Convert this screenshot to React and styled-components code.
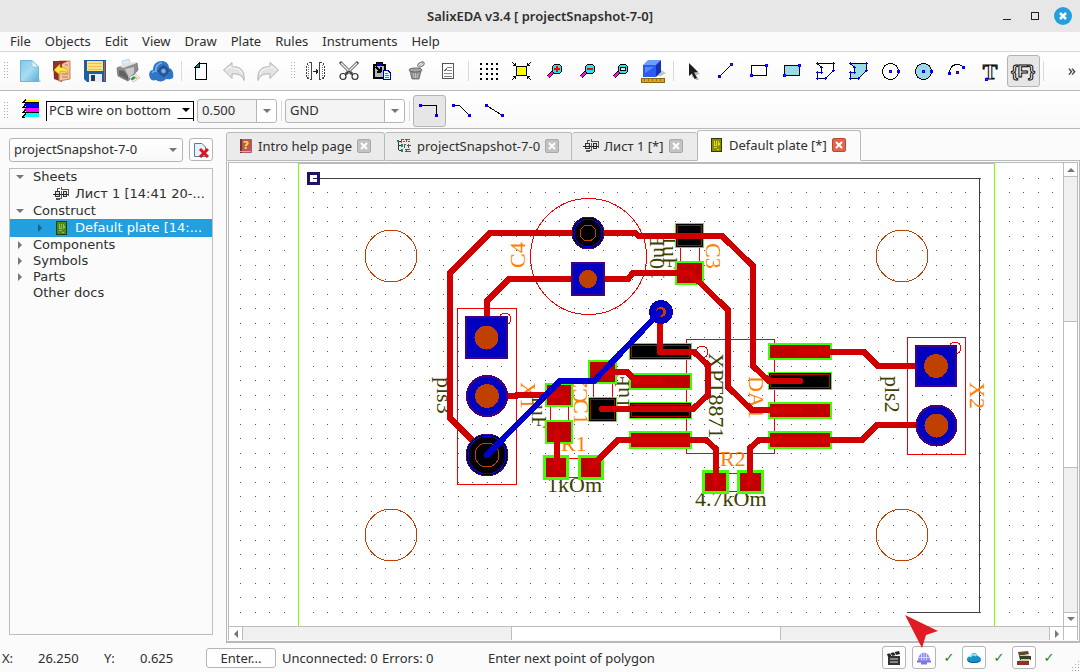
import React from 'react'
import styled, { createGlobalStyle, css } from 'styled-components'

const GlobalStyle = createGlobalStyle`
    * { box-sizing: border-box; }
    html, body, #root { height: 100%; }
    body {
        margin: 0;
        background: #fbfbfb;
        color: #2e2e2e;
        font-family: "Noto Sans", "Open Sans", sans-serif;
        font-size: 13px;
        line-height: 16px;
    }
    button, select { font: inherit; color: inherit; }
`

const Window = styled.div`
    display: flex;
    flex-direction: column;
    height: 100vh;
    overflow: hidden;
`

const TitleBar = styled.header`
    display: grid;
    grid-template-columns: 1fr auto 1fr;
    align-items: center;
    height: 32px;
    background: #e7e7e7;
    font-weight: 600;
`

const Title = styled.h1`
    grid-column: 2;
    margin: 0;
    font-size: 13px;
    font-weight: 600;
`

const WindowButtons = styled.div`
    display: flex;
    justify-content: flex-end;
    gap: 10px;
    padding-right: 8px;
`

const PlainButton = styled.button`
    display: grid;
    place-items: center;
    width: 18px;
    height: 18px;
    padding: 0;
    border: 0;
    background: none;
`

const MenuBar = styled.nav`
    display: flex;
    flex: none;
    height: 20px;
    padding-left: 3px;
    border-bottom: 1px solid #d9d9d9;
`

const MenuItem = styled.button`
    padding: 0 7px 2px;
    border: 0;
    background: none;
    white-space: nowrap;
`

const ToolBar = styled.div`
    display: flex;
    flex: none;
    align-items: center;
    height: ${p => (p.$second ? 38 : 39)}px;
    padding-top: ${p => (p.$second ? 2 : 0)}px;
    border-bottom: 1px solid #b9b9b9;
    background: linear-gradient(#ffffff, #f9f9f9);
`

const Group = styled.div`
    display: flex;
    align-items: center;
    margin-right: 3px;
`

const HandleBox = styled.span`
    display: grid;
    place-items: center;
    width: 13px;
`

const Sep = styled.span`
    width: 1px;
    height: 20px;
    margin: 0 3px;
    background: #dadada;
`

const ToolButton = styled.button`
    display: grid;
    flex: none;
    place-items: center;
    width: 33px;
    height: 32px;
    padding: 0;
    border: 1px solid transparent;
    border-radius: 3px;
    background: none;
    ${p => p.$on && css`
        border-color: #b4b4b4;
        background: #e6e6e6;
    `}
`

const More = styled.button`
    margin-left: auto;
    padding: 0 4px 2px;
    border: 0;
    background: none;
    font-size: 16px;
`

const SelectBox = styled.label`
    position: relative;
    display: flex;
    flex: none;
    width: ${p => p.$width}px;
    height: ${p => (p.$classic ? 20 : 24)}px;
    margin-right: ${p => p.$gap || 0}px;
    border: 1px solid #b5b5b5;
    border-radius: 3px;
    background: ${p => (p.$plain ? 'linear-gradient(#fff, #f8f8f8)' : '#f4f4f4')};
    ${p => p.$classic && css`
        border: solid #000;
        border-width: 1px 1px 0 1px;
        border-radius: 0;
        background: #fff;
    `}
    select {
        flex: 1;
        min-width: 0;
        padding: 0 22px 2px ${p => (p.$classic ? 2 : 4)}px;
        border: 0;
        background: none;
        appearance: none;
    }
`

const Drop = styled.span`
    position: absolute;
    top: 0;
    right: 0;
    display: grid;
    place-items: center;
    width: ${p => (p.$classic ? 16 : 20)}px;
    height: 100%;
    border-left: 1px solid ${p => (p.$split ? '#b5b5b5' : 'transparent')};
    pointer-events: none;
    ${p => p.$classic && css`
        height: 17px;
        border-bottom: 1px solid #000;
    `}
    ${p => p.$split && css`
        background: #fff;
        border-radius: 0 3px 3px 0;
    `}
`

const Body = styled.main`
    display: grid;
    flex: 1;
    grid-template-columns: 217px 1fr;
    min-height: 0;
`

const Side = styled.aside`
    display: flex;
    flex-direction: column;
    gap: 6px;
    padding: 9px 4px 8px 9px;
`

const SideTop = styled.div`
    display: flex;
    justify-content: space-between;
`

const IconButton = styled.button`
    display: grid;
    place-items: center;
    width: 24px;
    height: 23px;
    padding: 0;
    border: 1px solid #b5b5b5;
    border-radius: 3px;
    background: #fff;
`

const Tree = styled.ul`
    flex: 1;
    margin: 0;
    padding: 0;
    border: 1px solid #bdbdbd;
    list-style: none;
    font-family: "DejaVu Sans", sans-serif;
`

const TreeRow = styled.li`
    display: grid;
    grid-template-columns: ${p => (p.$deep ? '20px 20px 22px 1fr' : '20px 1fr')};
    align-items: center;
    height: ${p => (p.$deep ? 18 : 16)}px;
    color: ${p => (p.$selected ? '#fff' : 'inherit')};
    background: ${p => (p.$selected ? '#219fdf' : 'none')};
    line-height: 16px;
    white-space: nowrap;
    svg { justify-self: center; }
`

const TreeName = styled.span`
    padding-left: 3px;
`

const Work = styled.section`
    display: flex;
    flex-direction: column;
    min-width: 0;
    padding: 1px 0 0 9px;
`

const Tabs = styled.div`
    display: flex;
    align-items: flex-end;
    height: 31px;
`

const Tab = styled.div`
    display: flex;
    align-items: center;
    gap: 5px;
    width: ${p => p.$width}px;
    height: ${p => (p.$active ? 31 : 29)}px;
    padding: 0 11px 1px;
    border: 1px solid #b9b9b9;
    border-left-width: ${p => (p.$first || p.$active ? 1 : 0)}px;
    border-right-width: ${p => (p.$joined ? 0 : 1)}px;
    border-bottom-color: ${p => (p.$active ? '#fbfbfb' : '#b9b9b9')};
    border-radius: 3px 3px 0 0;
    background: ${p => (p.$active ? '#fbfbfb' : '#ebebeb')};
`

const TabName = styled.button`
    display: flex;
    align-items: center;
    gap: ${p => (p.$active ? 7 : 5)}px;
    padding: 0 0 0 ${p => (p.$active ? 2 : 0)}px;
    border: 0;
    background: none;
    white-space: nowrap;
`

const Close = styled.button`
    display: grid;
    flex: none;
    place-items: center;
    width: 14px;
    height: 14px;
    padding: 0;
    border: 1px solid ${p => (p.$hot ? '#c2452f' : '#a8a8a8')};
    border-radius: 2px;
    background: ${p => (p.$hot ? '#e2664d' : '#c3c3c3')};
`

const TabFill = styled.div`
    flex: 1;
    height: 1px;
    background: #b9b9b9;
`

const Frame = styled.div`
    flex: 1;
    min-height: 0;
    padding: 1px;
    border: solid #b9b9b9;
    border-width: 0 1px 2px 1px;
`

const Viewport = styled.div`
    display: grid;
    grid-template-columns: 1fr 14px;
    grid-template-rows: 1fr 14px;
    height: 100%;
    border: solid #b9b9b9;
    border-width: 1px 1px 0 1px;
    background: #fff;
`

const CanvasArea = styled.div`
    position: relative;
    min-width: 0;
    min-height: 0;
`

const Canvas = styled.svg`
    display: block;
    position: absolute;
    width: 100%;
    height: 100%;
`

/* the big red pointer floats over the drawing and the scroll bar */
const Pointer = styled.svg`
    position: absolute;
    left: 676px;
    top: 452px;
`

const Scroll = styled.div`
    display: flex;
    flex-direction: ${p => (p.$vertical ? 'column' : 'row')};
    border: solid #bdbdbd;
    border-width: ${p => (p.$vertical ? '0 0 0 1px' : '1px 0 0 0')};
    background: #f0f0f0;
`

const Arrow = styled.button`
    display: grid;
    flex: none;
    place-items: center;
    width: 13px;
    height: 13px;
    padding: 0;
    border: 0;
    background: #fff;
`

const Track = styled.div`
    flex: 1;
    border: 0 solid #bdbdbd;
    ${p => (p.$vertical ? css`border-bottom-width: 1px;` : css`border-right-width: 1px;`)}
    background: ${p => (p.$thumb ? '#fff' : '#f0f0f0')};
    ${p => p.$start && (p.$vertical ? css`border-top-width: 1px;` : css`border-left-width: 1px;`)}
`

const Corner = styled.div`
    border: solid #bdbdbd;
    border-width: 1px 0 0 1px;
    background: #fff;
`

const StatusBar = styled.footer`
    display: flex;
    flex: none;
    align-items: center;
    height: 29px;
    padding-left: 2px;
    white-space: nowrap;
`

const Field = styled.span`
    width: ${p => p.$width}px;
`

const EnterButton = styled.button`
    width: 70px;
    height: 20px;
    margin-right: 6px;
    padding: 0;
    border: 1px solid #b5b5b5;
    border-radius: 3px;
    background: #fff;
    line-height: 18px;
`

const StatusIcons = styled.div`
    display: flex;
    align-items: center;
    margin-left: auto;
    padding-right: 8px;
`

const Check = styled.span`
    width: 26px;
    text-align: center;
    color: #128a12;
    font-family: "DejaVu Sans", sans-serif;
    font-size: 13px;
`

const Grip = styled.svg`
    align-self: flex-end;
`

/* ---------- tool icons, all on a 25x24 box ---------- */

const IconSvg = styled.svg`
    overflow: visible;
`

const Icon = ({ soft, children }) => (
    <IconSvg width="25" height="24" viewBox="0 0 25 24" fill="none" shapeRendering={soft ? 'auto' : 'crispEdges'} aria-hidden="true">
        {children}
    </IconSvg>
)

const Node = ({ x, y, red }) => (
    <g>
        <rect x={x - 1} y={y - 1} width="3" height="3" fill="#0000f0" />
        {red && <rect x={x} y={y} width="1" height="1" fill="#f00" />}
    </g>
)

const Lens = ({ children }) => (
    <Icon>
        <path d="M11 13 L6 18" stroke="#000" strokeWidth="4" />
        <path d="M11 13 L6 18" stroke="#f0f" strokeWidth="2" />
        <circle cx="15" cy="10" r="5" fill="#20e8f0" stroke="#000" />
        {children}
    </Icon>
)

const Arrowed = ({ flip }) => (
    <Icon soft>
        <g transform={flip ? 'translate(25 0) scale(-1 1)' : undefined}>
            <path d="M1.500 11 L10 3.500 V8 C18 7 23 11 22 21.500 C20 16 16 14.500 10 15 V19.500 Z" fill="#e2e2e2" stroke="#b4b4b4" />
            <path d="M4 11 L9 7 V9 C14 9 18 10 20 15" stroke="#fafafa" />
        </g>
    </Icon>
)

const polyPath = 'M4 4 H20 V11 L12 19 H4 V13 H8 V8 Z'
const polyNodes = [[4, 4], [20, 4], [20, 11], [12, 19], [4, 19], [4, 13], [8, 13], [8, 8]]

const PolyIcon = ({ fill }) => (
    <Icon>
        <path d={polyPath} transform="translate(.5 .5)" fill={fill} stroke="#000" />
        {polyNodes.map(([x, y], i) => (
            <path key={i} d={`M${x - 1} ${y + 0.5} h3 M${x + 0.5} ${y - 1} v3`} stroke="#0000f0" />
        ))}
    </Icon>
)

const RectIcon = ({ fill }) => (
    <Icon>
        <rect x="4.500" y="6.500" width="15" height="10" fill={fill} stroke="#000" strokeWidth="1" />
        <Node x={4} y={16} red />
        <Node x={19} y={6} red />
    </Icon>
)

const CircleIcon = ({ fill }) => (
    <Icon>
        <circle cx="11.500" cy="12.500" r="8" fill={fill} stroke="#000" />
        <Node x={11} y={12} red />
        <Node x={19} y={12} />
    </Icon>
)

const icons = {
    create: (
        <Icon soft>
            <path d="M5 23 H24 L22 19 Z" fill="#c8ccd0" />
            <path d="M3.500 1.500 H15 L21.500 8 V22.500 H3.500 Z" fill="url(#paper)" stroke="#6fb6d8" />
            <path d="M15 1.500 V8 H21.500 Z" fill="#eaf8ff" stroke="#8cc6e0" />
            <defs>
                <linearGradient id="paper" x1="0" y1="0" x2="1" y2="1">
                    <stop offset="0" stopColor="#7cc8e8" />
                    <stop offset=".5" stopColor="#a9dcf0" />
                    <stop offset="1" stopColor="#56b0d8" />
                </linearGradient>
            </defs>
        </Icon>
    ),
    open: (
        <Icon soft>
            <path d="M3 2 L12 4 V23 L4 20 Z" fill="#8c2f2a" />
            <path d="M9 2 H20 V20 L9 22 Z" fill="#f1c5a0" stroke="#c98055" />
            <path d="M3 2 H18 L12 5 V12 H3 Z" fill="#93322c" />
            <path d="M12 15 H18 M12 18 H18 M15 6 H18" stroke="#c0764a" />
            <path d="M4 11 L10 5 V8.500 C15 8 18 10 18 15 C16 12 14 12 10 12.500 V16 Z" fill="#ffe83a" stroke="#c79a10" strokeWidth=".7" />
        </Icon>
    ),
    save: (
        <Icon soft>
            <path d="M1 1 H23 V23 H4 L1 20 Z" fill="#1f5f9e" />
            <rect x="4" y="2" width="16" height="10" fill="#ffe08a" />
            <path d="M5 4.500 H19 M5 7.500 H19 M5 10.500 H19" stroke="#f0c04c" />
            <rect x="6" y="15" width="13" height="8" fill="#e9eef4" />
            <rect x="8" y="16" width="4" height="6" fill="#2b3a4c" />
            <rect x="21" y="2" width="1" height="20" fill="#d05a28" />
        </Icon>
    ),
    print: (
        <Icon soft>
            <path d="M6 2 L13 0 L15 8 L8 9 Z" fill="#dcecfa" stroke="#a6bdd2" strokeWidth=".6" />
            <path d="M1 9 L8 6 L21 4 L22 11 L12 22 L2 17 Z" fill="#8f8f8f" stroke="#5d5d5d" strokeWidth=".7" />
            <path d="M1 9 C3 7 5 7 7 9 L21 4 L14 3 L8 5 Z" fill="#e2e2e2" />
            <path d="M3 11 L8 12 L12 17 V21 L3 16 Z" fill="#626262" />
            <path d="M9 10 L18 8 V14 L13 19 Z" fill="#c9c9c9" />
            <path d="M13 18 L20 15 L24 19 L17 23 Z" fill="#f3f3f3" stroke="#999" strokeWidth=".5" />
            <path d="M15 19 L18 17 L20 19 L17 21 Z" fill="#35a04a" />
            <path d="M19 17 L22 19 L20 20 Z" fill="#e8c22c" />
            <circle cx="16" cy="20" r="1" fill="#2b66d0" />
        </Icon>
    ),
    cloud: (
        <Icon soft>
            <path d="M1 19 C-1 14 1 11 4 11 C4 5 8 2 13 2 C18 2 20 6 20 9 C24 10 25 15 24 19 C21 21 18 20 17 20 C15 23 9 23 7 21 C4 22 2 21 1 19 Z" fill="#2f76c8" />
            <path d="M3 14 C4 12 6 12 7 12 C6 7 10 4 13 4" stroke="#74aef0" strokeWidth="1.500" />
            <circle cx="14.500" cy="12" r="4" stroke="#2a4f80" strokeWidth="2" />
            <circle cx="14.500" cy="12" r="2" fill="#7fb0e4" />
            <path d="M14.500 6 V8 M14.500 16 V18 M8.500 12 H10.500 M18.500 12 H20.500" stroke="#2a4f80" strokeWidth="1.500" />
        </Icon>
    ),
    page: (
        <Icon>
            <path d="M10 4.500 H17.500 V20.500 H6.500 V8" fill="#fff" stroke="#000" />
            <path d="M6 8 L10 4 V8 Z" fill="#088" stroke="#000" />
        </Icon>
    ),
    undo: <Arrowed />,
    redo: <Arrowed flip />,
    mirror: (
        <Icon>
            <path d="M7.500 3 V21 M15.500 3 V21" stroke="#444" />
            <path d="M7 3.500 C3 4 2 6 2 12 C2 18 3 20 7 20.500 M16 3.500 C20 4 21 6 21 12 C21 18 20 20 16 20.500" stroke="#444" strokeDasharray="2 1" />
            <path d="M4.500 6 V19 M18.500 6 V19" stroke="#777" strokeDasharray="1 1" />
            <path d="M9 12.500 H14 M12.500 10 V15 M13.500 11 V14" stroke="#222" />
        </Icon>
    ),
    cut: (
        <Icon soft>
            <path d="M3 3 L15 15 M21 3 L9 15" stroke="#444" strokeWidth="3" />
            <path d="M4 4 L14 14 M20 4 L10 14" stroke="#f4f4f4" strokeWidth="1.500" />
            <circle cx="6" cy="17.500" r="3" stroke="#333" strokeWidth="1.200" />
            <circle cx="18" cy="17.500" r="3" stroke="#333" strokeWidth="1.200" />
            <path d="M8 16 L12 12 L16 16" stroke="#333" strokeWidth="1.200" />
        </Icon>
    ),
    paste: (
        <Icon>
            <rect x="3.500" y="5.500" width="11" height="13" fill="#b8b8b8" stroke="#000" strokeWidth="2" />
            <rect x="6" y="3" width="6" height="3" fill="#0000c0" stroke="#000" />
            <path d="M6 8 L10 12 M11 8 V13 M7 12.500 H11" stroke="#000" strokeWidth="2" />
            <path d="M13.500 11.500 H18 L20.500 14 V20.500 H13.500 Z" fill="#dff" stroke="#009" />
            <path d="M15 14.500 H18 M15 16.500 H19 M15 18.500 H19" stroke="#0aa" />
        </Icon>
    ),
    trash: (
        <Icon soft>
            <path d="M7 12 L9 20 H16 L18 12 Z" fill="#8c8c8c" stroke="#5c5c5c" strokeWidth=".7" />
            <ellipse cx="12.500" cy="11" rx="6.500" ry="2" fill="#a6a6a6" stroke="#666" />
            <path d="M10 14 L11 19 M12.500 14 V19 M15 14 L14 19" stroke="#c4c4c4" />
            <ellipse cx="18" cy="5.500" rx="3.500" ry="2" transform="rotate(-30 18 5.500)" stroke="#777" />
            <path d="M16 7 L20 4" stroke="#999" />
        </Icon>
    ),
    list: (
        <Icon>
            <rect x="6.500" y="4.500" width="11" height="15" fill="#fff" stroke="#555" />
            <path d="M11 8.500 H16 M11 11.500 H16 M8 14.500 H16 M8 17.500 H16" stroke="#888" />
            <path d="M8 11 L9 12 L11 9" stroke="#666" />
        </Icon>
    ),
    dots: (
        <Icon>
            {[4, 9, 14, 19].map(y => [4, 10, 15, 20].map(x => (
                <rect key={x + '-' + y} x={x} y={y} width="2" height="2" fill="#000" />
            )))}
        </Icon>
    ),
    fit: (
        <Icon>
            <rect x="7.500" y="7.500" width="10" height="9" fill="#ff0" stroke="#000" />
            <path d="M3 3 L7 7 M22 3 L18 7 M3 21 L7 17 M22 21 L18 17" stroke="#000" />
            <path d="M4 6.500 H7 M6.500 4 V7 M21 6.500 H18 M18.500 4 V7 M4 17.500 H7 M6.500 20 V17 M21 17.500 H18 M18.500 20 V17" stroke="#000" />
        </Icon>
    ),
    zoomIn: <Lens><path d="M12 10 H18 M15 7 V13" stroke="#f00" strokeWidth="2" /></Lens>,
    zoomOut: <Lens><path d="M12 10 H18" stroke="#f00" strokeWidth="2" /></Lens>,
    zoomFit: <Lens><rect x="12.500" y="8.500" width="5" height="3" fill="#bff" stroke="#000" /></Lens>,
    cube: (
        <Icon soft>
            <path d="M3 17 H20 L25 14 L20 11 Z" fill="#c4c4c4" />
            <path d="M2 6 L7 1 H20 L16 6 Z" fill="#6f9cff" />
            <path d="M2 6 H15 V18 H2 Z" fill="#2a5cf0" />
            <path d="M15 6 L20 1 V13 L15 18 Z" fill="#1533b4" />
            <path d="M4 8 H13 L4 14 Z" fill="#5a86ff" />
            <rect x=".5" y="19.500" width="23" height="4" fill="#e0a41c" stroke="#8a6410" />
            <path d="M3.500 20 V22 M7.500 20 V22 M11.500 20 V22 M15.500 20 V22 M19.500 20 V22" stroke="#6b4c08" strokeWidth=".6" />
        </Icon>
    ),
    cursor: (
        <Icon soft>
            <path d="M10 6 L19 15 L15 16 L18 21 L15 21 L13 17 L11 19 Z" fill="#bbb" />
            <path d="M8 4 L17 13 L13 13.500 L16 19 L13.500 20 L11 14.500 L8 17 Z" fill="#1c1c1c" />
        </Icon>
    ),
    line: (
        <Icon>
            <path d="M5.500 17.500 L17.500 5.500" stroke="#000" />
            <Node x={5} y={17} />
            <Node x={17} y={5} red />
        </Icon>
    ),
    rect: <RectIcon fill="#fff" />,
    fillRect: <RectIcon fill="#98d9ea" />,
    poly: <PolyIcon fill="#fff" />,
    fillPoly: <PolyIcon fill="#98d9ea" />,
    circle: <CircleIcon fill="#fff" />,
    fillCircle: <CircleIcon fill="#98d9ea" />,
    arc: (
        <Icon>
            <path d="M4.500 14.500 C4.500 5 14 3 18.500 8.500" stroke="#000" />
            <Node x={4} y={14} />
            <Node x={18} y={8} />
            <Node x={12} y={13} red />
        </Icon>
    ),
    text: (
        <Icon soft>
            <text x="12" y="20" textAnchor="middle" fontFamily="Liberation Serif, serif" fontWeight="700" fontSize="22" fill="#fff" stroke="#000" strokeWidth="1">T</text>
            <Node x={8} y={20} red />
        </Icon>
    ),
    fragment: (
        <Icon soft>
            <text x="12" y="18" textAnchor="middle" fontFamily="Liberation Sans, sans-serif" fontWeight="700" fontSize="17" fill="#fff" stroke="#000" strokeWidth="1">{'{F}'}</text>
        </Icon>
    ),
    layers: (
        <Icon>
            <path d="M9 1 H22 V3 H7 Z" fill="#ff0" />
            <path d="M9 4 H22 V8 H9 L6 5 Z" fill="#00f" />
            <path d="M9 9 H22 V13 H9 L6 10 Z" fill="#f0f" />
            <path d="M9 14 H22 V18 H6 L9 15 Z" fill="#0ff" />
            {[3, 8, 13].map(y => (
                <path key={y} d={`M5 ${y + 0.5} H22 M6 ${y + 0.5} L9 ${y - 2.5}`} stroke="#000" />
            ))}
            <path d="M5 18.500 L9 14.500 M5 18.500 H8" stroke="#000" />
        </Icon>
    ),
    bend: (
        <Icon>
            <path d="M3 6.500 H19.500 V16" stroke="#000" />
            <Node x={3} y={6} />
            <Node x={19} y={16} />
        </Icon>
    ),
    slant: (
        <Icon>
            <path d="M3 6.500 H9.500 L19.500 16.500" stroke="#000" />
            <Node x={3} y={6} />
            <Node x={19} y={16} />
        </Icon>
    ),
    straight: (
        <Icon>
            <path d="M3.500 6.500 L19.500 16.500" stroke="#000" />
            <Node x={3} y={6} />
            <Node x={19} y={16} />
        </Icon>
    )
}

const SmallIcon = ({ children, w = 16 }) => (
    <svg width={w} height="16" viewBox={`0 0 ${w} 16`} fill="none" aria-hidden="true">{children}</svg>
)

const SheetIcon = () => (
    <SmallIcon>
        <path d="M2.500 5.500 H6.500 V10.500 H2.500 Z M10.500 5.500 H13.500 V10.500 H10.500 Z" fill="#ddd" stroke="#333" shapeRendering="crispEdges" />
        <path d="M0 8.500 H16" stroke="#222" shapeRendering="crispEdges" />
        <path d="M4.500 5 V2.500 H7 M8.500 1 V4 M8 3.500 H15.500 V10 M8.500 5 V12.500 H2.500 M3 12 V13.500 H7" stroke="#555" shapeRendering="crispEdges" />
    </SmallIcon>
)

const PlateIcon = ({ fill = '#4c8a1c', line = '#b0d860' }) => (
    <SmallIcon w={11}>
        <rect x=".5" y="1.500" width="10" height="13" fill={fill} stroke="#2c3a10" />
        <path d="M3.500 4 V8 H5.500 V4 M7.500 4 V9 M3 10.500 H6 M5.500 12.500 H8 M8.500 6 V8" stroke={line} strokeOpacity=".7" shapeRendering="crispEdges" />
    </SmallIcon>
)

const HelpIcon = () => (
    <SmallIcon w={15}>
        <rect x="2" y="1" width="12" height="14" rx="1" fill="#b5585b" />
        <path d="M2 1 H4 V15 H2 Z" fill="#7d3034" />
        <path d="M2 13.500 H13" stroke="#e0b080" />
        <text x="8" y="11" textAnchor="middle" fontFamily="DejaVu Sans, sans-serif" fontWeight="700" fontSize="11" fill="#ffe022">?</text>
    </SmallIcon>
)

const ProjectIcon = () => (
    <SmallIcon>
        <path d="M2.500 3 V12 M3 7.500 H7 M3 12.500 H7 M3 3.500 H5" stroke="#333" shapeRendering="crispEdges" />
        <path d="M5 1.500 H8 M9 1.500 H14 M5.500 2 V5 M7 3.500 H9 M10.500 2 V4 M12 3.500 H14" stroke="#d03030" shapeRendering="crispEdges" />
        <path d="M8 6.500 H10 M8.500 6 V10 M11 7.500 H15 M12.500 6 V10 M9 13.500 H15 M9 11.500 H14 M10.500 11 V14" stroke="#555" shapeRendering="crispEdges" />
        <path d="M1 2 H3 V4 H1 Z M5 6 H7 V9 H5 Z M5 11 H7 V14 H5 Z" fill="#188a6a" />
    </SmallIcon>
)

const Triangle = ({ dir = 'down', fill = '#777' }) => {
    const d = { down: 'M0 2 H8 L4 6 Z', right: 'M2 0 V8 L6 4 Z', left: 'M6 0 V8 L2 4 Z', up: 'M0 6 H8 L4 2 Z' }[dir]
    return <svg width="8" height="8" viewBox="0 0 8 8" aria-hidden="true"><path d={d} fill={fill} /></svg>
}

const Handle = () => (
    <HandleBox>
        <svg width="5" height="18" viewBox="0 0 5 18" shapeRendering="crispEdges" aria-hidden="true">
            {[0, 3, 6, 9, 12, 15].map(y => (
                <path key={y} d={`M0 ${y}h1v1h-1z M3 ${y}h1v1h-1z`} fill="#b0b0b0" />
            ))}
        </svg>
    </HandleBox>
)

const Combo = ({ label, value, width, gap, split, classic, plain }) => (
    <SelectBox $width={width} $gap={gap} $classic={classic} $plain={plain}>
        <select aria-label={label} defaultValue={value}>
            <option>{value}</option>
        </select>
        <Drop $split={split} $classic={classic}><Triangle fill={classic ? '#000' : '#777'} /></Drop>
    </SelectBox>
)

const Tool = ({ name, on }) => <ToolButton type="button" aria-label={name} $on={on}>{icons[name]}</ToolButton>

/* ---------- the board ---------- */

const RED = '#d00000'
const ORANGE = '#c04000'

const traces = [
    'M588 233 H490 L450 273 V418 L487 455',
    'M588 233 H635 L639 236 H722 L753 266 V366 L769 381 H800',
    'M588 279 H509 L487 301 V337',
    'M588 279 H628 L633 273 H690 L728 310 V387 L752 410 H800',
    'M660 312 V352 H694 L708 365 V395 L693 409 H602',
    'M602 372 H627 L636 381 H660',
    'M487 396 H516 L517 395 H560',
    'M557 432 V467',
    'M591 467 L618 440 H706 L716 449 V483',
    'M750 483 V448 L759 440 H862 L877 425 H936',
    'M800 352 H864 L878 366 H936'
]

const outlines = [
    [457, 308, 59, 176],
    [686, 339, 88, 114],
    [907, 337, 58, 117],
    [680, 247, 19, 16],
    [550, 406, 18, 16],
    [593, 382, 19, 17],
    [567, 458, 13, 19],
    [727, 473, 13, 18]
]

const redPads = [
    [675, 261, 29, 24, 2],
    [545, 383, 28, 24, 2],
    [545, 420, 28, 24, 2],
    [588, 360, 29, 24, 2],
    [543, 455, 26, 25, 3],
    [578, 455, 26, 25, 3],
    [702, 470, 27, 24, 3],
    [737, 470, 27, 24, 3],
    [629, 373, 63, 17, 2],
    [629, 431, 63, 18, 2],
    [768, 343, 64, 17, 2],
    [768, 402, 64, 17, 2],
    [768, 431, 64, 18, 2]
]

const blackPads = [
    [675, 223, 29, 25],
    [588, 397, 29, 25],
    [629, 343, 63, 17],
    [629, 402, 63, 17],
    [768, 372, 64, 18]
]

const squarePads = [
    [571, 262, 34, 9],
    [465, 316, 43, 12],
    [915, 345, 42, 12]
]

const roundPads = [[487, 396], [936.5, 425.5]]
const emptyPads = [[588, 233, 16, 8], [487, 455, 21, 12]]

// text, x, y, angle, is a reference name
const labels = [
    ['C4', 525, 268, -90, 1],
    ['C3', 706, 243, 90, 1],
    ['10uF', 664, 280, -90, 0],
    ['1uF', 663, 235, 90, 0],
    ['pls3', 437, 377, 90, 0],
    ['X1', 521, 382, 90, 1],
    ['1uF', 532, 394, 90, 0],
    ['C2', 587, 403, -90, 1],
    ['C1', 574, 399, 90, 1],
    ['1uF', 629, 409, -90, 0],
    ['XPT8871', 709, 353, 90, 0],
    ['DA1', 749, 376, 90, 1],
    ['pls2', 885, 376, 90, 0],
    ['X2', 970, 382, 90, 1],
    ['R1', 561, 451, 0, 1],
    ['1kOm', 547, 492, 0, 0],
    ['R2', 720, 466, 0, 1],
    ['4.7kOm', 695, 506, 0, 0]
]

const gridDots = () => {
    let d = ''
    for (let r = 0; r <= 30; r++) {
        for (let c = 0; c <= 56; c++) {
            d += `M${Math.floor(240.6 + 14.5 * c)} ${Math.floor(178.3 + 14.47 * r)}h1v1h-1z`
        }
    }
    return d
}

const Board = () => (
    <Canvas>
        {/* board units start at the window corner, so shift into the viewport */}
        <g transform="translate(-229 -163)" fill="none" shapeRendering="crispEdges">
            <path d={gridDots()} fill="#555" />
            <path d="M298.500 640 V163.500 H994.500 V640" stroke="#80ff00" />
            <path d="M320 178.500 H979.500 V612.500 H907" stroke="#404040" />
            <rect x="308.500" y="173.500" width="10" height="10" fill="#fff" stroke="#1c1464" strokeWidth="3" />
            <path d="M313 178.500 H318" stroke="#1c1464" />

            {[[391, 256], [902, 256], [391, 535], [902, 535]].map(([x, y]) => (
                <circle key={x + '-' + y} cx={x} cy={y} r="26" stroke={ORANGE} />
            ))}
            <circle cx="588.5" cy="256.5" r="58" stroke="#f00000" />
            {outlines.map(([x, y, w, h], i) => (
                <rect key={i} x={x + 0.5} y={y + 0.5} width={w} height={h} stroke="#f00000" />
            ))}
            {[[505, 319], [702, 352], [955, 348]].map(([x, y]) => (
                <circle key={x} cx={x} cy={y} r="6" stroke="#f00000" />
            ))}

            <g fontFamily="Liberation Serif, serif" fontSize="22">
                {labels.map(([t, x, y, a, o], i) => (
                    <text key={i} transform={`translate(${x} ${y}) rotate(${a})`} fill={o ? '#ff8000' : '#404000'}>{t}</text>
                ))}
            </g>

            {blackPads.map(([x, y, w, h], i) => (
                <g key={i}>
                    <rect x={x + 0.5} y={y + 0.5} width={w - 1} height={h - 1} fill="#000" stroke="#40ff00" />
                    <rect x={x + 2.5} y={y + 2.5} width={w - 5} height={h - 5} stroke="#c00000" />
                </g>
            ))}
            {redPads.map(([x, y, w, h, b], i) => (
                <g key={i}>
                    <rect x={x} y={y} width={w} height={h} fill="#40ff00" />
                    <rect x={x + b} y={y + b} width={w - 2 * b} height={h - 2 * b} fill="#c00000" />
                </g>
            ))}

            <g stroke={RED} strokeWidth="6" strokeLinecap="round" strokeLinejoin="round">
                {traces.map(d => <path key={d} d={d} />)}
            </g>

            {squarePads.map(([x, y, s, r], i) => (
                <g key={i}>
                    <rect x={x + 1} y={y + 1} width={s - 2} height={s - 2} fill="#0000c0" stroke="#440080" strokeWidth="2" />
                    <circle cx={x + s / 2} cy={y + s / 2} r={r} fill={ORANGE} />
                </g>
            ))}
            {roundPads.map(([x, y]) => (
                <g key={x}>
                    <circle cx={x} cy={y} r="20" fill="#0000c0" stroke="#440080" strokeWidth="2" />
                    <circle cx={x} cy={y} r="12" fill={ORANGE} />
                </g>
            ))}
            {emptyPads.map(([x, y, r, hole]) => (
                <g key={x}>
                    <circle cx={x} cy={y} r={r} fill="#000" stroke="#440080" />
                    <circle cx={x} cy={y} r={r - 2} stroke="#0000f0" />
                    <circle cx={x} cy={y} r={hole} stroke={ORANGE} />
                </g>
            ))}

            <circle cx="661" cy="312" r="12" fill="#0000c0" />
            <circle cx="661" cy="312" r="5" fill={ORANGE} />
            <path d="M660 312 L594 381 H560 L487 455" stroke="#0000d0" strokeWidth="6" strokeLinecap="round" strokeLinejoin="round" />
        </g>
    </Canvas>
)

const menu = ['File', 'Objects', 'Edit', 'View', 'Draw', 'Plate', 'Rules', 'Instruments', 'Help']

const tabs = [
    { name: 'Intro help page', icon: <HelpIcon />, width: 159, first: true },
    { name: 'projectSnapshot-7-0', icon: <ProjectIcon />, width: 187 },
    { name: 'Лист 1 [*]', icon: <SheetIcon />, width: 125, joined: true },
    { name: 'Default plate [*]', icon: <PlateIcon fill="#8c8c00" line="#ffff30" />, width: 164, active: true }
]

const tree = [
    { name: 'Sheets', arrow: 'down' },
    { name: 'Лист 1 [14:41 20-...', deep: true, icon: <SheetIcon /> },
    { name: 'Construct', arrow: 'down' },
    { name: 'Default plate [14:...', deep: true, arrow: 'right', icon: <PlateIcon />, selected: true },
    { name: 'Components', arrow: 'right' },
    { name: 'Symbols', arrow: 'right' },
    { name: 'Parts', arrow: 'right' },
    { name: 'Other docs' }
]

const ScrollBar = ({ vertical }) => (
    <Scroll $vertical={vertical}>
        <Arrow type="button" aria-label="back"><Triangle dir={vertical ? 'up' : 'left'} /></Arrow>
        <Track $vertical={vertical} $start />
        <Track $vertical={vertical} $thumb />
        <Track $vertical={vertical} />
        <Arrow type="button" aria-label="forward"><Triangle dir={vertical ? 'down' : 'right'} /></Arrow>
    </Scroll>
)

const App = () => (
    <Window>
        <GlobalStyle />
        <TitleBar>
            <Title>SalixEDA v3.4 [ projectSnapshot-7-0]</Title>
            <WindowButtons>
                <PlainButton type="button" aria-label="Minimize">
                    <svg width="10" height="10"><path d="M1 8.500 H9" stroke="#222" /></svg>
                </PlainButton>
                <PlainButton type="button" aria-label="Maximize">
                    <svg width="10" height="10"><rect x="1.500" y="1.500" width="7" height="7" fill="none" stroke="#222" /></svg>
                </PlainButton>
                <PlainButton type="button" aria-label="Close">
                    <svg width="18" height="18">
                        <circle cx="9" cy="9" r="9" fill="#219fdf" />
                        <path d="M6 6 L12 12 M12 6 L6 12" stroke="#fff" strokeWidth="2.500" />
                    </svg>
                </PlainButton>
            </WindowButtons>
        </TitleBar>

        <MenuBar>
            {menu.map(m => <MenuItem type="button" key={m}>{m}</MenuItem>)}
        </MenuBar>

        <ToolBar>
            <Group>
                <Handle />
                {['create', 'open', 'save', 'print', 'cloud'].map(n => <Tool key={n} name={n} />)}
                <Sep />
                {['page', 'undo', 'redo'].map(n => <Tool key={n} name={n} />)}
            </Group>
            <Group>
                <Handle />
                {['mirror', 'cut', 'paste', 'trash', 'list'].map(n => <Tool key={n} name={n} />)}
                <Sep />
                {['dots', 'fit', 'zoomIn', 'zoomOut', 'zoomFit', 'cube'].map(n => <Tool key={n} name={n} />)}
                <Sep />
                {['cursor', 'line', 'rect', 'fillRect', 'poly', 'fillPoly', 'circle', 'fillCircle', 'arc', 'text'].map(n => <Tool key={n} name={n} />)}
                <Tool name="fragment" on />
                <Sep />
            </Group>
            <More type="button" aria-label="More">»</More>
        </ToolBar>

        <ToolBar $second>
            <Handle />
            <Tool name="layers" />
            <Combo label="Layer" value="PCB wire on bottom" width={148} gap={3} classic />
            <Combo label="Width" value="0.500" width={80} gap={1} split />
            <Sep />
            <Combo label="Net" value="GND" width={120} gap={1} split />
            <Sep />
            <Tool name="bend" on />
            <Tool name="slant" />
            <Tool name="straight" />
        </ToolBar>

        <Body>
            <Side>
                <SideTop>
                    <Combo label="Project" value="projectSnapshot-7-0" width={174} plain />
                    <IconButton type="button" aria-label="Close project">
                        <SmallIcon>
                            <path d="M1.500 1.500 H9 L12.500 5 V14.500 H1.500 Z" fill="#e8f1fb" stroke="#5a7aa0" />
                            <path d="M7 7 L15 15 M15 7 L7 15" stroke="#d81818" strokeWidth="3" />
                        </SmallIcon>
                    </IconButton>
                </SideTop>
                <Tree>
                    {tree.map(r => (
                        <TreeRow key={r.name} $deep={r.deep} $selected={r.selected}>
                            {r.deep && <span />}
                            {r.arrow ? <Triangle dir={r.arrow} fill={r.selected ? '#17618a' : '#777'} /> : <span />}
                            {r.icon}
                            <TreeName>{r.name}</TreeName>
                        </TreeRow>
                    ))}
                </Tree>
            </Side>

            <Work>
                <Tabs>
                    {tabs.map(t => (
                        <Tab key={t.name} $width={t.width} $active={t.active} $first={t.first} $joined={t.joined}>
                            <TabName type="button" $active={t.active}>{t.icon}{t.name}</TabName>
                            <Close type="button" aria-label="Close tab" $hot={t.active}>
                                <svg width="8" height="8"><path d="M1 1 L7 7 M7 1 L1 7" stroke="#fff" strokeWidth="2" /></svg>
                            </Close>
                        </Tab>
                    ))}
                    <TabFill />
                </Tabs>
                <Frame>
                    <Viewport>
                        <CanvasArea>
                            <Board />
                            <Pointer width="34" height="34" aria-hidden="true">
                                <path d="M0 0 L33 16 L21 20 L17 33 Z" fill="#e01b24" />
                            </Pointer>
                        </CanvasArea>
                        <ScrollBar vertical />
                        <ScrollBar />
                        <Corner />
                    </Viewport>
                </Frame>
            </Work>
        </Body>

        <StatusBar>
            <Field $width={36}>X:</Field>
            <Field $width={66}>26.250</Field>
            <Field $width={36}>Y:</Field>
            <Field $width={66}>0.625</Field>
            <EnterButton type="button">Enter...</EnterButton>
            <Field $width={100}>Unconnected: 0</Field>
            <Field $width={106}>Errors: 0</Field>
            <span>Enter next point of polygon</span>
            <StatusIcons>
                <IconButton type="button" aria-label="Record">
                    <SmallIcon>
                        <rect x="2" y="6" width="12" height="9" fill="#333" />
                        <path d="M1 4 L13 1 L14 4 L2 7 Z" fill="#222" />
                        <path d="M4 3 L6 6 M8 2 L10 5 M4 9 H12 M4 12 H12" stroke="#ddd" />
                    </SmallIcon>
                </IconButton>
                <Field $width={6} />
                <IconButton type="button" aria-label="Network">
                    <SmallIcon>
                        <path d="M2 11 C2 0 14 0 14 11 Z" fill="#8c8cf4" />
                        <path d="M3 7.500 H13 M5.500 4 V11 M8 2 V11 M10.500 4 V11" stroke="#d4d4ff" />
                        <path d="M1 11.500 H15 M5 13.500 H11" stroke="#7878e0" strokeWidth="2" />
                    </SmallIcon>
                </IconButton>
                <Check>✓</Check>
                <IconButton type="button" aria-label="Cloud">
                    <SmallIcon>
                        <path d="M1 10 C1 6 4 7 5 5 C7 2 10 3 11 5 C12 7 15 6 15 10 C15 14 1 14 1 10 Z" fill="#1694c8" />
                        <path d="M4 7 C6 4 9 4 10 6" stroke="#9ce8ff" strokeWidth="2" />
                        <path d="M2 11 C5 13 11 13 14 11" stroke="#0a5a88" />
                    </SmallIcon>
                </IconButton>
                <Check>✓</Check>
                <IconButton type="button" aria-label="Library">
                    <SmallIcon>
                        <path d="M2 2 L12 1 L13 4 L3 6 Z" fill="#5c4a2c" />
                        <path d="M3 6 H15 V10 H4 Z" fill="#33402c" />
                        <path d="M1 11 H13 V15 H1 Z" fill="#8a3426" />
                        <path d="M4 5.500 H13 M5 9.500 H14 M3 10.500 H13" stroke="#e0c890" />
                    </SmallIcon>
                </IconButton>
                <Check>✓</Check>
            </StatusIcons>
            <Grip width="10" height="12" aria-hidden="true">
                <path d="M8 1h1v1h-1z M8 4h1v1h-1z M5 4h1v1h-1z M8 7h1v1h-1z M5 7h1v1h-1z M2 7h1v1h-1z M8 10h1v1h-1z M5 10h1v1h-1z M2 10h1v1h-1z" fill="#aaa" />
            </Grip>
        </StatusBar>
    </Window>
)

export default App
